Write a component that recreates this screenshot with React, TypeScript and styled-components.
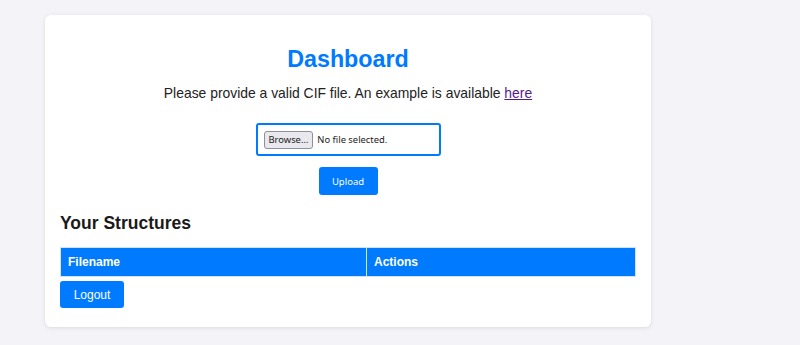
import React from "react";
import styled, { createGlobalStyle } from "styled-components";

const Global = createGlobalStyle`
  html, body { margin: 0; padding: 0; }
  body {
    background: #f4f4f8;
    font-family: "Liberation Sans", Arial, sans-serif;
    color: #222;
  }
`;

const Page = styled.div`
  padding: 15px 0 18px 45px;
`;

const Card = styled.div`
  width: 606px;
  box-sizing: border-box;
  background: #fff;
  border-radius: 6px;
  box-shadow: 0 1px 4px rgba(0, 0, 0, 0.1);
  padding: 31px 15px 19px;
  display: flex;
  flex-direction: column;
`;

const Title = styled.h1`
  margin: 0;
  text-align: center;
  color: #007bff;
  font-size: 23.3px;
  line-height: 27px;
  font-weight: bold;
`;

const Intro = styled.p`
  margin: 12px 0 0;
  text-align: center;
  font-size: 13.9px;
  line-height: 16px;
  color: #222;
  a { color: #551a8b; }
`;

const UploadForm = styled.form`
  display: flex;
  flex-direction: column;
  align-items: center;
  margin-top: 22px;
`;

const FileBox = styled.label`
  width: 185px;
  height: 33px;
  box-sizing: border-box;
  border: 2px solid #007bff;
  border-radius: 3px;
  display: flex;
  align-items: center;
  gap: 4px;
  padding-left: 6px;
  font-family: "Noto Sans", sans-serif;
  font-size: 9.4px;
  color: #1b1b1b;
`;

const BrowseButton = styled.span`
  display: inline-flex;
  align-items: center;
  justify-content: center;
  height: 18px;
  box-sizing: border-box;
  padding: 0 4px;
  background: #e9e9ed;
  border: 1px solid #8f8f9d;
  border-radius: 3px;
  color: #1b1b1b;
`;

const HiddenInput = styled.input`
  display: none;
`;

const PrimaryButton = styled.button<{ $font?: string; $size?: string }>`
  height: 27px;
  box-sizing: border-box;
  background: #007bff;
  color: #fff;
  border: none;
  border-radius: 3px;
  font-family: ${(p) => p.$font ?? "'Liberation Sans', sans-serif"};
  font-size: ${(p) => p.$size ?? "12px"};
  cursor: pointer;
`;

const UploadButton = styled(PrimaryButton)`
  margin-top: 11px;
  width: 59px;
  height: 28px;
  padding: 0;
`;

const SectionTitle = styled.h2`
  margin: 18px 0 0;
  font-size: 17.5px;
  line-height: 20px;
  font-weight: bold;
  color: #1a1a1a;
`;

const Table = styled.table`
  margin-top: 14px;
  width: 576px;
  border-collapse: collapse;
  table-layout: fixed;
`;

const HeadCell = styled.th<{ $w?: number }>`
  background: #007bff;
  color: #fff;
  text-align: left;
  font-size: 12px;
  font-weight: bold;
  height: 29px;
  box-sizing: border-box;
  padding: 0 7px;
  border: 1px solid #cfe2f7;
  width: ${(p) => (p.$w ? `${p.$w}px` : "auto")};
`;

const LogoutButton = styled(PrimaryButton)`
  margin-top: 4px;
  width: 64px;
  align-self: flex-start;
`;

export default function App() {
  return (
    <>
      <Global />
      <Page>
        <Card>
          <Title>Dashboard</Title>
          <Intro>
            Please provide a valid CIF file. An example is available <a href="#">here</a>
          </Intro>
          <UploadForm onSubmit={(e) => e.preventDefault()}>
            <FileBox>
              <BrowseButton>Browse…</BrowseButton>
              <span>No file selected.</span>
              <HiddenInput type="file" />
            </FileBox>
            <UploadButton type="submit" $font="'Noto Sans', sans-serif" $size="9.5px">
              Upload
            </UploadButton>
          </UploadForm>
          <SectionTitle>Your Structures</SectionTitle>
          <Table>
            <thead>
              <tr>
                <HeadCell $w={306}>Filename</HeadCell>
                <HeadCell>Actions</HeadCell>
              </tr>
            </thead>
            <tbody></tbody>
          </Table>
          <LogoutButton type="button">Logout</LogoutButton>
        </Card>
      </Page>
    </>
  );
}
